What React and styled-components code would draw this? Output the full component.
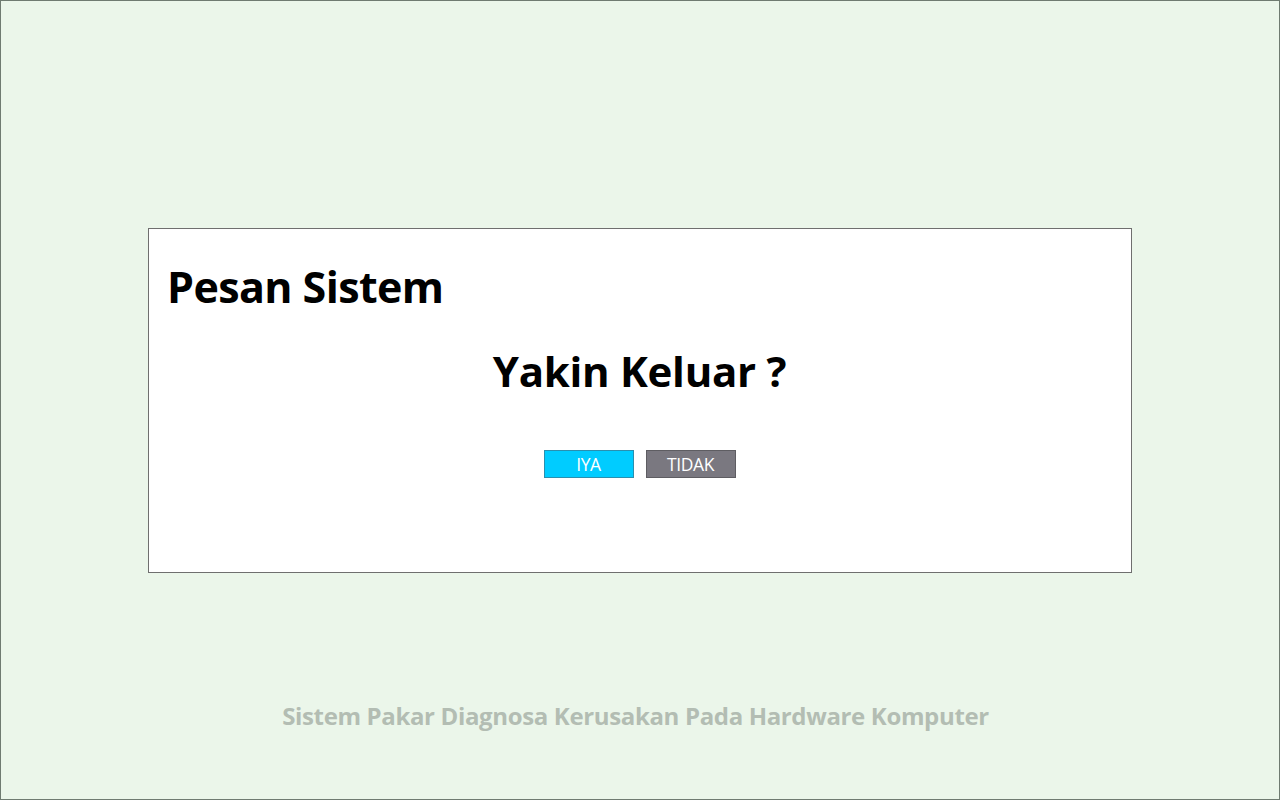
import React from 'react';
import styled, { createGlobalStyle } from 'styled-components';

const GlobalStyle = createGlobalStyle`
    html, body {
        margin: 0;
        padding: 0;
        background: #ebf6ea;
    }
    * {
        box-sizing: border-box;
    }
`;

const App = () => {
    return (
        <>
            <GlobalStyle />
            <Frame>
                <Dialog>
                    <Title>Pesan Sistem</Title>
                    <Question>Yakin Keluar ?</Question>
                    <Actions>
                        <Button variant="yes">IYA</Button>
                        <Button variant="no">TIDAK</Button>
                    </Actions>
                </Dialog>
                <Footer>Sistem Pakar Diagnosa Kerusakan Pada Hardware Komputer</Footer>
            </Frame>
        </>
    );
};

const Frame = styled.div`
    width: 1280px;
    height: 800px;
    border: 1px solid #6f7b71;
    background: #ebf6ea;
    display: flex;
    flex-direction: column;
    align-items: flex-start;
    padding: 227px 0 0 147px;
    font-family: "Open Sans", "Noto Sans", sans-serif;
`;

const Dialog = styled.div`
    width: 984px;
    height: 345px;
    background: #ffffff;
    border: 1px solid #6f6f6f;
    display: flex;
    flex-direction: column;
    padding: 30px 19px 0 18px;
`;

const Title = styled.div`
    font-size: 43px;
    font-weight: 700;
    color: #000;
    line-height: 56px;
    letter-spacing: -0.6px;
`;

const Question = styled.div`
    margin-top: 30px;
    text-align: center;
    font-size: 42px;
    font-weight: 700;
    color: #000;
    line-height: 52px;
    letter-spacing: -0.3px;
`;

const Actions = styled.div`
    display: flex;
    justify-content: center;
    gap: 12px;
    margin-top: 53px;
`;

const Button = styled.button`
    width: 90px;
    height: 28px;
    border: 1px solid ${p => (p.variant === 'yes' ? '#2a8fae' : '#5e5d62')};
    background: ${p => (p.variant === 'yes' ? '#00ccff' : '#7a7880')};
    color: #fff;
    font-family: "Open Sans", "Noto Sans", sans-serif;
    font-size: 17.5px;
    padding: 0;
    line-height: 26px;
    letter-spacing: -0.4px;
`;

const Footer = styled.div`
    width: 984px;
    margin-top: 128px;
    padding-right: 9px;
    text-align: center;
    font-size: 24px;
    font-weight: 700;
    color: #b3bdb3;
    letter-spacing: -0.35px;
    line-height: 30px;
`;

export default App;
